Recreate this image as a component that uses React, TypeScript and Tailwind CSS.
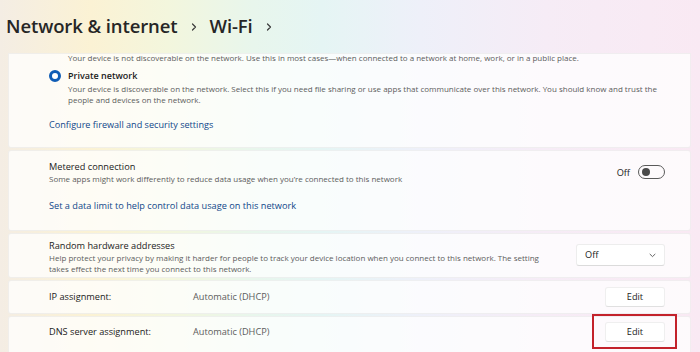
import React from 'react';

const font = { fontFamily: '"Segoe UI", "Open Sans", "Noto Sans", sans-serif' };

function Chevron() {
  return (
    <svg width="6" height="8" viewBox="0 0 6 8" className="mx-[13px] mt-[2px]" aria-hidden>
      <path d="M1.5 1 L4.5 4 L1.5 7" fill="none" stroke="#3a3a3a" strokeWidth="1.2" strokeLinecap="round" strokeLinejoin="round" />
    </svg>
  );
}

function EditButton() {
  return (
    <button
      type="button"
      className="h-[20px] w-[60px] shrink-0 rounded-[3px] border border-black/[0.06] border-b-black/[0.12] bg-white text-[9.2px] leading-none text-[#1b1b1b]"
    >
      Edit
    </button>
  );
}

function Card({ children, className = '' }: { children: React.ReactNode; className?: string }) {
  return (
    <div className={`rounded-[3px] border border-black/[0.05] bg-white/75 pl-[40px] pr-[25px] ${className}`}>
      {children}
    </div>
  );
}

export default function App() {
  return (
    <div
      className="h-[352px] w-[700px] overflow-hidden bg-[linear-gradient(90deg,#f4ede4_0%,#fbf2d4_13%,#f3f6dd_24%,#e8f6ec_36%,#e5f5f4_46%,#eef0f9_60%,#f6ecf6_78%,#f9e9f3_100%)] text-[#1b1b1b]"
      style={font}
    >
      <div className="flex h-[53px] items-center pb-[2px] pl-[6px]">
        <span className="text-[18.5px] font-semibold tracking-[-0.1px] text-[#262626]">Network &amp; internet</span>
        <Chevron />
        <span className="text-[18.5px] font-semibold tracking-[-0.1px] text-[#262626]">Wi-Fi</span>
        <Chevron />
      </div>

      <div className="ml-[8px] mr-[9px] flex flex-col gap-[2px]">
        <Card className="h-[95px] overflow-hidden rounded-t-none">
          <div className="-mt-[2px] pl-[19px] text-[8px] leading-[11px] text-[#5c5c5c] whitespace-nowrap">
            Your device is not discoverable on the network. Use this in most cases—when connected to a network at home, work, or in a public place.
          </div>
          <div className="mt-[6px] flex">
            <div className="mt-[0.5px] mr-[7px] h-[12px] w-[12px] shrink-0 rounded-full border-[3.5px] border-[#0f5cb5] bg-white" />
            <div>
              <div className="text-[9px] font-semibold leading-[13px]">Private network</div>
              <div className="mt-[1px] text-[8px] leading-[11px] text-[#5c5c5c] whitespace-nowrap">
                Your device is discoverable on the network. Select this if you need file sharing or use apps that communicate over this network. You should know and trust the
                <br />
                people and devices on the network.
              </div>
            </div>
          </div>
          <div className="mt-[13px] text-[9.1px] leading-[13px] text-[#10478a]">Configure firewall and security settings</div>
        </Card>

        <Card className="h-[81px] pt-[9px]">
          <div className="flex items-start justify-between">
            <div>
              <div className="text-[9.2px] leading-[13px]">Metered connection</div>
              <div className="text-[8px] leading-[11px] text-[#5c5c5c]">
                Some apps might work differently to reduce data usage when you’re connected to this network
              </div>
            </div>
            <div className="mt-[5px] flex items-center gap-[8px]">
              <span className="text-[9.2px] leading-[13px]">Off</span>
              <div className="flex h-[14px] w-[27px] items-center rounded-full border border-[#5a5a5a] pl-[2.5px]">
                <div className="h-[8px] w-[8px] rounded-full bg-[#4a4a4a]" />
              </div>
            </div>
          </div>
          <div className="mt-[15px] text-[9.2px] leading-[13px] text-[#10478a]">
            Set a data limit to help control data usage on this network
          </div>
        </Card>

        <Card className="h-[45px] pt-[5px]">
          <div className="flex items-start justify-between">
            <div>
              <div className="text-[9.2px] leading-[13px]">Random hardware addresses</div>
              <div className="text-[8px] leading-[11px] text-[#5c5c5c] whitespace-nowrap">
                Help protect your privacy by making it harder for people to track your device location when you connect to this network. The setting
                <br />
                takes effect the next time you connect to this network.
              </div>
            </div>
            <div className="mt-[5px] flex h-[22px] w-[89px] items-center justify-between rounded-[3px] border border-black/[0.07] border-b-black/[0.14] bg-white pl-[8px] pr-[8px]">
              <span className="text-[9.2px] leading-none">Off</span>
              <svg width="7" height="5" viewBox="0 0 7 5" aria-hidden>
                <path d="M1 1.2 L3.5 3.6 L6 1.2" fill="none" stroke="#555" strokeWidth="0.9" strokeLinecap="round" strokeLinejoin="round" />
              </svg>
            </div>
          </div>
        </Card>

        <Card className="flex h-[34px] items-start pt-[6px]">
          <span className="w-[144px] text-[9.2px] leading-[20px]">IP assignment:</span>
          <span className="flex-1 text-[9.2px] leading-[20px] text-[#5c5c5c]">Automatic (DHCP)</span>
          <EditButton />
        </Card>

        <Card className="relative flex h-[40px] items-start pt-[5px]">
          <span className="w-[144px] text-[9.2px] leading-[20px]">DNS server assignment:</span>
          <span className="flex-1 text-[9.2px] leading-[20px] text-[#5c5c5c]">Automatic (DHCP)</span>
          <EditButton />
          <div className="pointer-events-none absolute right-[13px] top-[-3px] h-[35px] w-[85px] border-[2.5px] border-[#c3222b]" />
        </Card>
      </div>
    </div>
  );
}
